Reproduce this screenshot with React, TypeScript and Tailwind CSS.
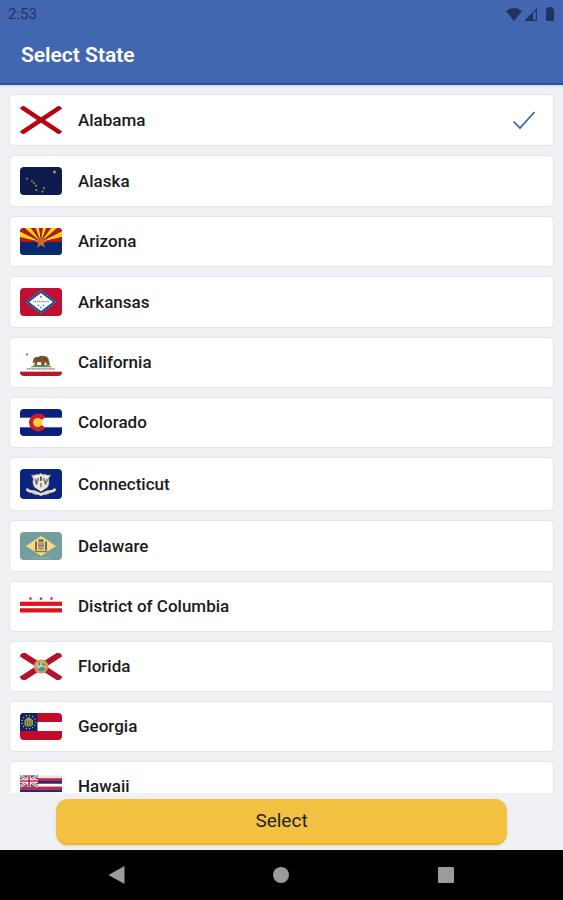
import * as React from "react";

interface StateItem {
    name: string;
    flag: () => React.ReactElement;
    flagClass: string;
}

function starPoints(cx: number, cy: number, r: number, inner = 0.4) {
    return Array.from({ length: 10 }, (_, i) => {
        const angle = (i * Math.PI) / 5 - Math.PI / 2;
        const radius = i % 2 === 0 ? r : r * inner;
        return `${(cx + radius * Math.cos(angle)).toFixed(2)},${(cy + radius * Math.sin(angle)).toFixed(2)}`;
    }).join(" ");
}

function Alabama() {
    return <path d="M0 0L42 28M42 0L0 28" stroke="#b3060f" strokeWidth="4.4" />;
}

function Alaska() {
    const stars = [
        [7, 11.5, 0.8],
        [12, 14, 0.8],
        [14, 16, 0.9],
        [16, 18.5, 0.9],
        [16.5, 23, 0.9],
        [22.5, 24.5, 0.9],
        [24, 21, 0.9],
    ];
    return (
        <>
            <rect width="42" height="28" fill="#0e1b4d" />
            {stars.map(([x, y, r]) => (
                <polygon key={x} points={starPoints(x, y, r + 0.5, 0.5)} fill="#b39a4c" />
            ))}
            <polygon points={starPoints(34.5, 5, 2, 0.5)} fill="#c9b458" />
        </>
    );
}

function Arizona() {
    const rays = Array.from({ length: 13 }, (_, i) => {
        const a = Math.PI + (i * Math.PI) / 13;
        const b = Math.PI + ((i + 1) * Math.PI) / 13;
        return `21,14.5 ${21 + 40 * Math.cos(a)},${14.5 + 40 * Math.sin(a)} ${21 + 40 * Math.cos(b)},${14.5 + 40 * Math.sin(b)}`;
    });
    return (
        <>
            <rect width="42" height="28" fill="#082a6c" />
            {rays.map((points, i) => (
                <polygon key={i} points={points} fill={i % 2 === 0 ? "#b8171c" : "#fbd20b"} />
            ))}
            <rect y="14.5" width="42" height="13.5" fill="#082a6c" />
            <polygon points={starPoints(21, 15, 6.8)} fill="#d2692a" />
        </>
    );
}

function Arkansas() {
    return (
        <>
            <rect width="42" height="28" fill="#c20f2f" />
            <path d="M21 1.5L37.5 14L21 26.5L4.5 14Z" fill="#22407f" />
            <path
                d="M21 2.5L36 14L21 25.5L6 14Z"
                fill="none"
                stroke="#dfe6f2"
                strokeWidth="0.8"
                strokeDasharray="0.8 1.2"
            />
            <path d="M21 5L33 14L21 23L9 14Z" fill="#fff" />
            <path d="M13 13.5H29" stroke="#7f94bf" strokeWidth="1.6" strokeDasharray="1.3 0.6" />
            <polygon points={starPoints(21, 9, 1.5)} fill="#33508f" />
            <polygon points={starPoints(18.5, 17.3, 1.3)} fill="#33508f" />
            <polygon points={starPoints(23.5, 17.3, 1.3)} fill="#33508f" />
            <polygon points={starPoints(21, 19.5, 1.3)} fill="#33508f" />
        </>
    );
}

function California() {
    return (
        <>
            <rect width="42" height="28" fill="#fff" />
            <rect y="23.5" width="42" height="4.5" fill="#b71826" />
            <polygon points={starPoints(7, 5.5, 2)} fill="#c94a5c" />
            <path d="M10 19Q14 15.5 21 16.5Q28 15 32.5 19Z" fill="#55945f" />
            <path
                d="M12.5 14.5L13.5 10Q15 7.8 18 8.2Q22 6 25.5 7.6Q28.8 8.6 28.8 12L30 16.5H27.3L25.5 13.5L23.5 17H21L21.3 13.8L17.5 13.5L16.5 17.2H14L15 13.7Z"
                fill="#7a5230"
            />
            <path d="M17 10.5L21 9.5M24 9.5L27 12" stroke="#4d3320" strokeWidth="0.7" />
            <path d="M7 20.7H35" stroke="#6d6560" strokeWidth="1.3" strokeDasharray="1.2 0.5" />
        </>
    );
}

function Colorado() {
    return (
        <>
            <rect width="42" height="28" fill="#0a1f7e" />
            <rect y="9" width="42" height="10" fill="#fff" />
            <path d="M25.5 8.2A9.3 9.3 0 1 0 25.5 19.8L20.5 15.5V12.5Z" fill="#c4202f" />
            <circle cx="17.8" cy="14" r="4.7" fill="#fbce3b" />
        </>
    );
}

function Connecticut() {
    return (
        <>
            <rect width="42" height="28" fill="#0a2480" />
            <path
                d="M11.5 5.5Q14.5 6.5 16.5 5Q18.5 6 20.8 4Q23 6 25.2 5Q27.2 6.5 30.5 5.5L28.5 9Q30 13 27.5 17L21 21L14.5 17Q12 13 13.3 9Z"
                fill="#efe8dc"
                stroke="#b6a36d"
                strokeWidth="0.6"
            />
            <path d="M15.5 9V12M18 8.5V11.5M24 8.5V11.5M27 9V12M21 13V17" stroke="#4e8057" strokeWidth="1.4" />
            <path d="M16.5 11V14.5M21 7V11M25.5 11V14.5" stroke="#704a71" strokeWidth="2" />
            <path
                d="M6.5 18.5Q9 21.5 14 21L21 23.8L28 21Q33 21.5 35.5 18.5"
                fill="none"
                stroke="#e9dfc5"
                strokeWidth="2.4"
            />
            <path d="M12 22L17 24M30 22L25 24" stroke="#d6c9a6" strokeWidth="1.2" />
        </>
    );
}

function Delaware() {
    return (
        <>
            <rect width="42" height="28" fill="#729f9d" />
            <path d="M21 4L36 14L21 24L6 14Z" fill="#f3dc83" />
            <path d="M18 10H24V17Q21 19.5 18 17Z" fill="#94a69b" />
            <path d="M18 13.5H24" stroke="#c96c2f" strokeWidth="1.5" />
            <path d="M18.5 8.5H23.5" stroke="#6b4a2c" strokeWidth="1.8" />
            <path d="M16 9.5V18" stroke="#744436" strokeWidth="1.6" />
            <path d="M26 9.5V18" stroke="#3d5147" strokeWidth="1.6" />
            <path d="M14.5 18.8Q21 20.5 27.5 18.8" fill="none" stroke="#a96a33" strokeWidth="1.2" />
            <path d="M11 26H31" stroke="#a6c2bf" strokeWidth="1" strokeDasharray="1.2 0.6" />
        </>
    );
}

function DistrictOfColumbia() {
    return (
        <>
            <rect width="42" height="28" fill="#fff" />
            <rect y="9" width="42" height="4.4" fill="#dd1420" />
            <rect y="15.8" width="42" height="4.4" fill="#dd1420" />
            <polygon points={starPoints(10.5, 5.8, 1.9, 0.5)} fill="#dd1440" />
            <polygon points={starPoints(21, 5.8, 1.9, 0.5)} fill="#dd1440" />
            <polygon points={starPoints(31.5, 5.8, 1.9, 0.5)} fill="#dd1440" />
        </>
    );
}

function Florida() {
    return (
        <>
            <path d="M0 0L42 28M42 0L0 28" stroke="#b3122c" strokeWidth="6" />
            <circle cx="21" cy="14" r="7.3" fill="#d99a45" />
            <circle cx="21" cy="14" r="5.3" fill="#b6c3a0" />
            <path d="M16 15.5Q20 13 26 16Q24 19.5 20.5 19Q17 18.5 16 15.5Z" fill="#5e8f92" />
            <path d="M19 9.5L20 14.5M22.5 11L25 13" stroke="#557b4f" strokeWidth="1.3" />
            <path d="M18 16L21 12.5" stroke="#f3edd1" strokeWidth="1.2" />
        </>
    );
}

function Georgia() {
    const ring = Array.from({ length: 13 }, (_, i) => (i * 2 * Math.PI) / 13);
    return (
        <>
            <rect width="42" height="28" fill="#fff" />
            <rect width="42" height="9.3" fill="#c30a2b" />
            <rect y="18.7" width="42" height="9.3" fill="#c30a2b" />
            <rect width="17.5" height="18.7" fill="#0d265f" />
            {ring.map((a) => (
                <circle key={a} cx={8.7 + 6.8 * Math.cos(a)} cy={9.4 + 7 * Math.sin(a)} r="0.7" fill="#aebbd0" />
            ))}
            <path d="M8.7 3.8L13 7.5V12.5L11 14H6.5L4.5 12.5V7.5Z" fill="#a79c46" />
            <path d="M6.5 8V13M8.7 7.5V13M11 8V13" stroke="#43603f" strokeWidth="0.9" />
        </>
    );
}

function Hawaii() {
    const stripes = ["#e9e4ea", "#c8213c", "#26267c", "#fff", "#d11d38", "#26267c", "#fff", "#d11d38"];
    return (
        <>
            {stripes.map((fill, i) => (
                <rect key={i} y={2.5 + i * 2.9} width="42" height="3" fill={fill} />
            ))}
            <rect y="2.5" width="18" height="11.6" fill="#3c4687" />
            <path d="M0 2.5L18 14M18 2.5L0 14" stroke="#f1e9ee" strokeWidth="2.8" />
            <path d="M0 2.5L18 14M18 2.5L0 14" stroke="#d1364c" strokeWidth="1" />
            <path d="M9 2.5V14.1M0 8.3H18" stroke="#fff" strokeWidth="3.4" />
            <path d="M9 2.5V14.1M0 8.3H18" stroke="#d11d38" strokeWidth="1.6" />
        </>
    );
}

const states: StateItem[] = [
    { name: "Alabama", flag: Alabama, flagClass: "h-[28px]" },
    { name: "Alaska", flag: Alaska, flagClass: "h-[28px]" },
    { name: "Arizona", flag: Arizona, flagClass: "h-[27px]" },
    { name: "Arkansas", flag: Arkansas, flagClass: "h-[28px]" },
    { name: "California", flag: California, flagClass: "h-[27px]" },
    { name: "Colorado", flag: Colorado, flagClass: "h-[27px]" },
    { name: "Connecticut", flag: Connecticut, flagClass: "h-[30px]" },
    { name: "Delaware", flag: Delaware, flagClass: "h-[28px]" },
    { name: "District of Columbia", flag: DistrictOfColumbia, flagClass: "h-[27px]" },
    { name: "Florida", flag: Florida, flagClass: "h-[27px]" },
    { name: "Georgia", flag: Georgia, flagClass: "h-[27px]" },
    { name: "Hawaii", flag: Hawaii, flagClass: "h-[27px]" },
];

function StatusBar() {
    return (
        <div className="flex h-7 items-center justify-between px-2 text-[#22325f]">
            <span className="text-[15px] leading-5">2:53</span>
            <div className="flex items-center gap-[2px]">
                <svg viewBox="0 0 16 13" className="h-[13px] w-4" fill="currentColor">
                    <path d="M8 13L0 3Q8 -3 16 3Z" />
                </svg>
                <svg viewBox="0 0 13 13" className="h-[13px] w-[13px]" fill="currentColor">
                    <path d="M0 13L13 0V13ZM9 5.3V11.8H11.8V3Z" fillRule="evenodd" />
                </svg>
                <svg viewBox="0 0 16 14" className="h-[14px] w-4" fill="currentColor">
                    <path d="M9 0H13V1.5H15V14H7V1.5H9Z" />
                </svg>
            </div>
        </div>
    );
}

function StateRow({ item, checked, onSelect }: { item: StateItem; checked: boolean; onSelect: () => void }) {
    const Flag = item.flag;
    return (
        <label className="relative flex shrink-0 cursor-pointer items-center rounded-[5px] border border-[#e4e6ea] bg-white py-[11px] pr-4 pl-[10px]">
            <input type="radio" name="state" className="sr-only" checked={checked} onChange={onSelect} />
            <svg
                viewBox="0 0 42 28"
                preserveAspectRatio="none"
                className={`w-[42px] shrink-0 overflow-hidden rounded ${item.flagClass}`}
                aria-hidden="true"
            >
                <Flag />
            </svg>
            <span className="ml-4 flex-1 text-[17px] leading-[23px] font-medium text-[#1b1b1b]">{item.name}</span>
            {checked && (
                <svg viewBox="0 0 26 20" className="h-5 w-[26px]" fill="none" stroke="#3360ae" strokeWidth="1.7">
                    <path d="M2.5 11.5L9 18L23.5 2" />
                </svg>
            )}
        </label>
    );
}

function NavBar() {
    return (
        <nav className="grid h-[50px] shrink-0 grid-cols-3 items-center justify-items-center bg-black px-[35px] text-[#9b9b9b]">
            <button aria-label="Back">
                <svg viewBox="0 0 18 18" className="h-[18px] w-[18px]" fill="currentColor">
                    <path d="M0.5 9L16.5 0V18Z" />
                </svg>
            </button>
            <button aria-label="Home" className="h-4 w-4 rounded-full bg-[#9b9b9b]" />
            <button aria-label="Recent apps" className="h-4 w-4 rounded-[1px] bg-[#9b9b9b]" />
        </nav>
    );
}

export default function App() {
    const [selected, setSelected] = React.useState("Alabama");

    return (
        <div className="flex h-screen flex-col bg-[#eff1f5] font-[Roboto,sans-serif]">
            <header className="z-10 h-[85px] shrink-0 border-b-2 border-[#1c54a6] bg-[#4267b0] shadow">
                <StatusBar />
                <h1 className="px-[21px] pt-[11px] text-[21px] leading-8 font-semibold text-white">Select State</h1>
            </header>
            <main className="flex min-h-0 flex-1 flex-col gap-[9px] overflow-y-auto px-[9px] pt-[9px] [scrollbar-width:none]">
                {states.map((item) => (
                    <StateRow
                        key={item.name}
                        item={item}
                        checked={item.name === selected}
                        onSelect={() => setSelected(item.name)}
                    />
                ))}
            </main>
            <div className="shrink-0 px-14 pt-[6px] pb-[5px]">
                <button className="h-[46px] w-full rounded-xl border-b-2 border-[#eeb526] bg-[#f3c142] text-[19px] leading-6 font-normal text-[#1f1f1f] shadow">
                    Select
                </button>
            </div>
            <NavBar />
        </div>
    );
}
